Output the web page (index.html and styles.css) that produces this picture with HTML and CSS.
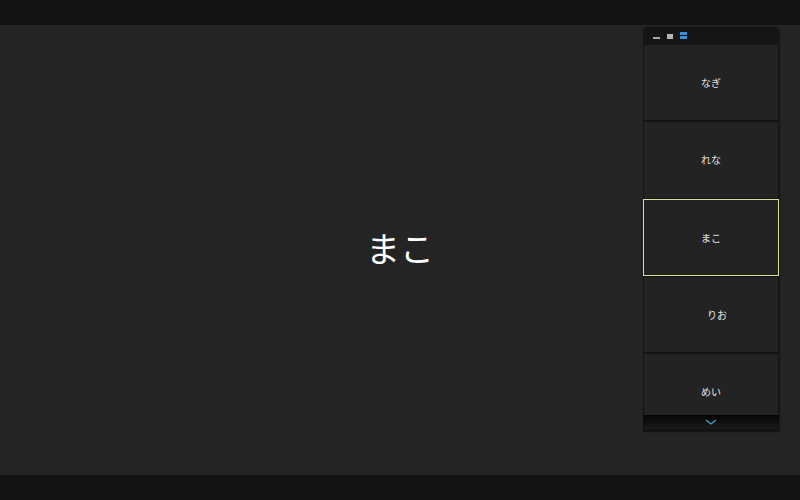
FILE: index.html
```html
<!DOCTYPE html>
<html lang="ja">
<head>
<meta charset="utf-8">
<link rel="stylesheet" href="styles.css">
</head>
<body>
<div class="app">
  <div class="topbar"></div>
  <main class="stage">
    <div class="current">まこ</div>
    <aside class="panel">
      <div class="panel-head">
        <span class="ico ico-min"></span>
        <span class="ico ico-max"></span>
        <span class="ico ico-list"><i></i><i></i></span>
      </div>
      <div class="list">
        <div class="item">なぎ</div>
        <div class="item">れな</div>
        <div class="item selected">まこ</div>
        <div class="item shifted">りお</div>
        <div class="item">めい</div>
      </div>
      <div class="panel-foot">
        <svg width="12" height="6" viewBox="0 0 12 6"><path d="M1 1 L6 5 L11 1" fill="none" stroke="#3fa6d8" stroke-width="1.2"/></svg>
      </div>
    </aside>
  </main>
  <div class="bottombar"></div>
</div>
</body>
</html>
```

FILE: styles.css
```css
* { box-sizing: border-box; }
html, body { margin: 0; padding: 0; }
body {
  width: 800px;
  height: 500px;
  overflow: hidden;
  background: #131313;
  font-family: "Noto Sans CJK JP", "Noto Sans", sans-serif;
}
.app {
  display: flex;
  flex-direction: column;
  height: 500px;
}
.topbar, .bottombar {
  height: 25px;
  background: #131313;
  flex: none;
}
.stage {
  position: relative;
  flex: 1;
  background: #242424;
  display: flex;
  align-items: center;
  justify-content: center;
}
.current {
  color: #ffffff;
  font-size: 34px;
  line-height: 1;
  margin-top: -4px;
}
.panel {
  position: absolute;
  left: 643px;
  top: 2px;
  width: 136px;
  height: 405px;
  background: #141414;
  border-radius: 5px 5px 0 0;
  box-shadow: 1px 0 2px rgba(0,0,0,0.35);
  overflow: hidden;
  display: flex;
  flex-direction: column;
}
.panel-head {
  height: 18px;
  flex: none;
  display: flex;
  align-items: center;
  gap: 7px;
  padding: 0 0 0 10px;
  background: #151515;
}
.ico { display: block; }
.ico-min {
  width: 7px;
  height: 2px;
  background: #a9a9a9;
  margin-top: 4px;
}
.ico-max {
  width: 6px;
  height: 5px;
  background: #b5b5b5;
  margin-top: 1px;
}
.ico-list {
  width: 7px;
  display: flex;
  flex-direction: column;
  gap: 1px;
  margin-top: -2px;
}
.ico-list i {
  display: block;
  height: 3px;
  background: #3d8fe0;
}
.list {
  flex: 1;
  display: flex;
  flex-direction: column;
  gap: 2px;
  overflow: hidden;
  padding: 0 1px;
}
.item {
  flex: none;
  height: 75.25px;
  background: #232323;
  color: #e6e6e6;
  font-size: 10px;
  display: flex;
  align-items: center;
  justify-content: center;
}
.item.selected {
  border: 1px solid #d6e29a;
  height: 77px;
  margin: -1px -1px -0.75px;
}
.item.shifted { padding-left: 12px; }
.panel-foot {
  position: absolute;
  left: 0;
  right: 0;
  bottom: 0;
  height: 17px;
  background: linear-gradient(#050505, rgba(20,20,20,0.3));
  display: flex;
  justify-content: center;
  padding-top: 4px;
}
```
